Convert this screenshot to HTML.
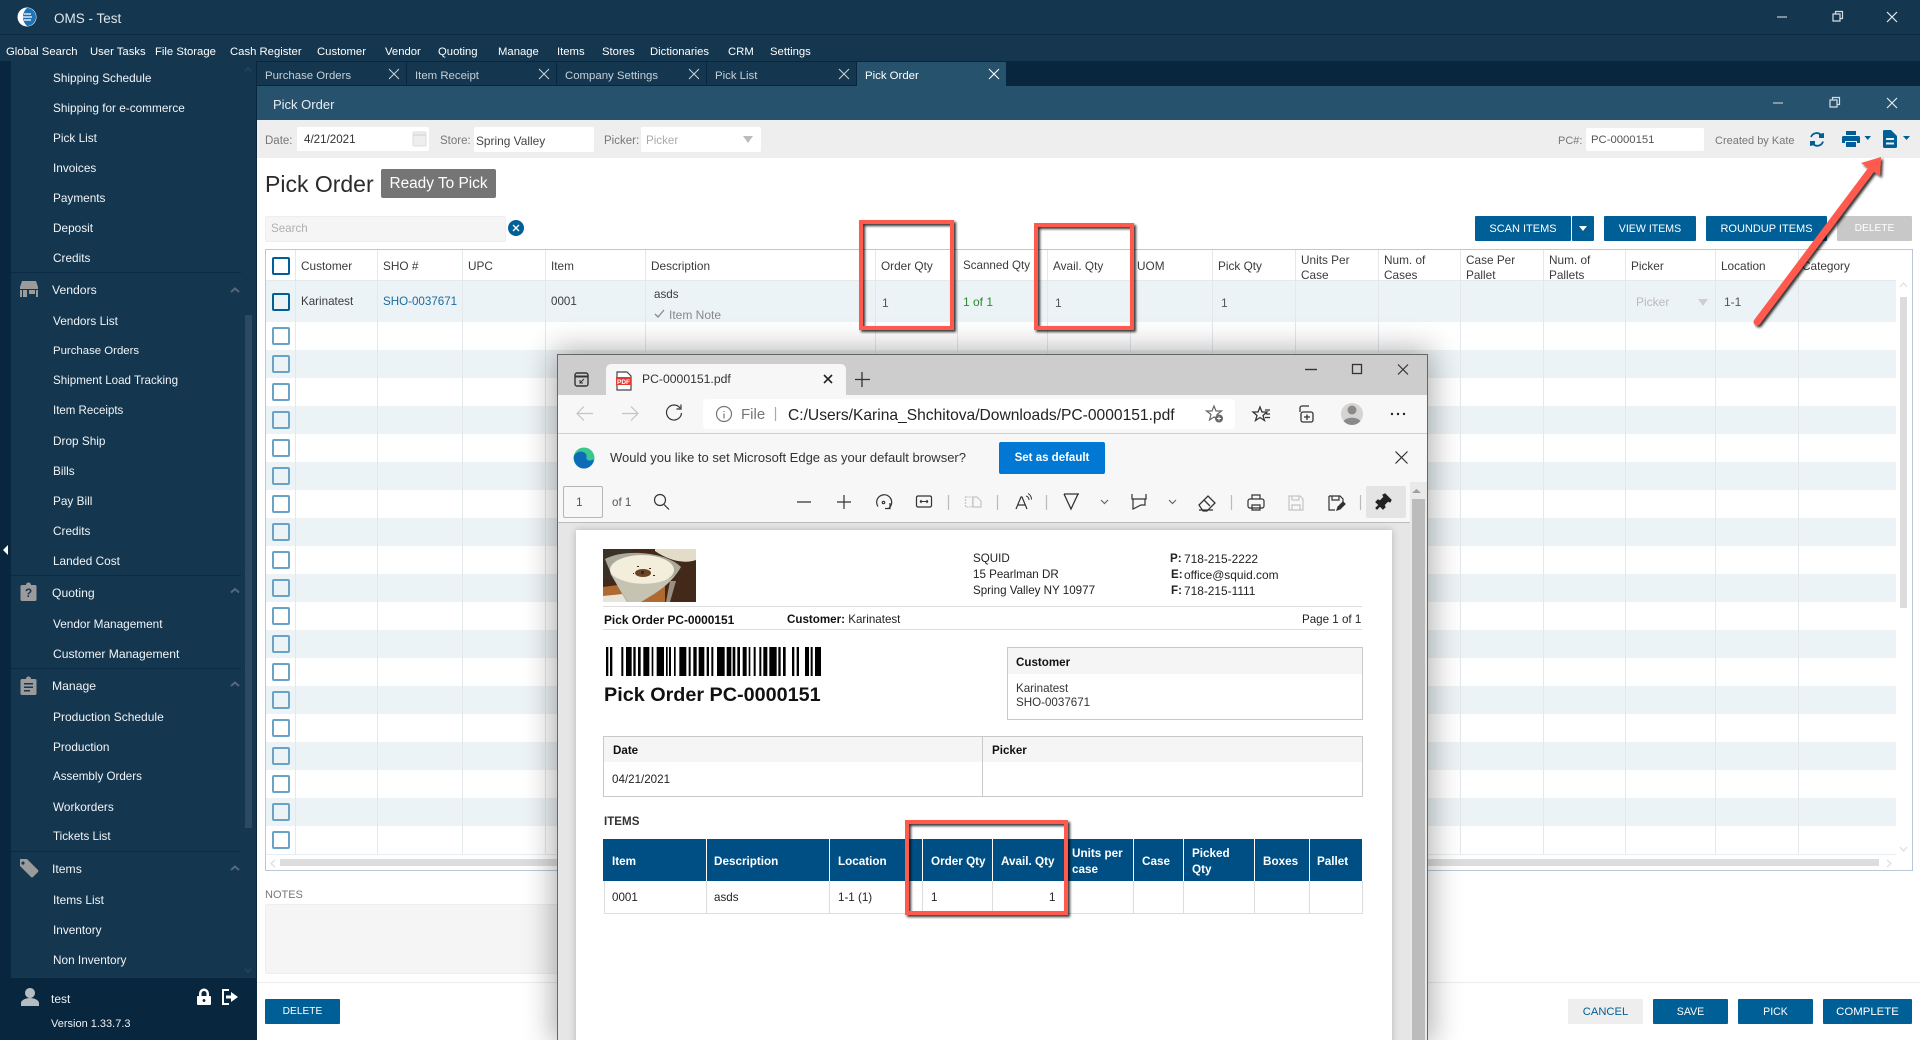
<!DOCTYPE html>
<html><head><meta charset="utf-8"><title>OMS - Test</title>
<style>
html,body{margin:0;padding:0;width:1920px;height:1040px;overflow:hidden;background:#fff;font-family:"Liberation Sans",Arial,sans-serif}
div,span,svg{position:absolute}
.t{white-space:nowrap;line-height:20px;font-size:12px;color:#333;margin-top:1px}
.m{color:#fff;font-size:11.3px}
.s{color:#f2f5f7;font-size:11.8px;left:53px;margin-top:0}
.h{color:#f0f3f5;font-size:12.2px;left:52px}
.tb{color:#c4d0d9;font-size:11.4px}
.l{color:#777;font-size:11.5px}
.c{color:#3b3b3b;font-size:11.8px}
.v{color:#3b3b3b;font-size:11.6px}
.b{color:#fff;font-size:11px;text-align:center;line-height:26px;height:25px;top:216px;background:#005f96;border-radius:1px}
.f{height:25px;top:999px;line-height:26px;background:#005f96;color:#fff;font-size:11.4px;text-align:center;border-radius:1px}
.i{background:#fff;border-radius:2px}
.p{font-size:11.6px;color:#222;white-space:nowrap;line-height:16px;margin-top:1px}
.n{font-size:11.9px}
.w{font-size:11.7px;color:#fff;font-weight:bold;white-space:nowrap;line-height:16px;margin-top:1px}
</style></head><body>

<!-- app chrome -->
<div style="left:0;top:0;width:1920px;height:34px;background:#14364f"></div>
<div style="left:0;top:34px;width:1920px;height:1px;background:#0b2a42"></div>
<div style="left:0;top:35px;width:1920px;height:26px;background:#14364f"></div>
<div style="left:0;top:61px;width:1920px;height:25px;background:#08263d"></div>
<div style="left:257px;top:86px;width:1663px;height:34px;background:#27526e"></div>
<div style="left:257px;top:120px;width:1663px;height:38px;background:#eeeeee"></div>

<span class="t" style="left:54px;top:8px;color:#dfe6eb;font-size:13.5px">OMS - Test</span>
<svg style="left:15px;top:5px" width="24" height="24" viewBox="0 0 24 24"><circle cx="12" cy="12" r="9.5" fill="#fff"/><path d="M12 3a9 9 0 0 1 0 18a12 12 0 0 1 -4 -9a12 12 0 0 1 4 -9z" fill="#1d72b8"/><path d="M9 9h7M8 12h9M9 15h7" stroke="#fff" stroke-width="1.2"/></svg>

<span class="t m" style="left:6px;top:41px">Global Search</span>
<span class="t m" style="left:90px;top:41px">User Tasks</span>
<span class="t m" style="left:155px;top:41px">File Storage</span>
<span class="t m" style="left:230px;top:41px">Cash Register</span>
<span class="t m" style="left:317px;top:41px">Customer</span>
<span class="t m" style="left:385px;top:41px">Vendor</span>
<span class="t m" style="left:438px;top:41px">Quoting</span>
<span class="t m" style="left:498px;top:41px">Manage</span>
<span class="t m" style="left:557px;top:41px">Items</span>
<span class="t m" style="left:602px;top:41px">Stores</span>
<span class="t m" style="left:650px;top:41px">Dictionaries</span>
<span class="t m" style="left:728px;top:41px">CRM</span>
<span class="t m" style="left:770px;top:41px">Settings</span>

<!-- tabs -->
<div style="left:257px;top:62px;width:149px;height:23px;background:#14364f"></div>
<div style="left:407px;top:62px;width:149px;height:23px;background:#14364f"></div>
<div style="left:557px;top:62px;width:149px;height:23px;background:#14364f"></div>
<div style="left:707px;top:62px;width:149px;height:23px;background:#14364f"></div>
<div style="left:857px;top:62px;width:149px;height:24px;background:#27526e"></div>
<span class="t tb" style="left:265px;top:65px">Purchase Orders</span>
<span class="t tb" style="left:415px;top:65px">Item Receipt</span>
<span class="t tb" style="left:565px;top:65px">Company Settings</span>
<span class="t tb" style="left:715px;top:65px">Pick List</span>
<span class="t tb" style="left:865px;top:65px;color:#fff">Pick Order</span>
<svg style="left:0;top:0" width="1920" height="160" fill="none" stroke="#c4d0d9" stroke-width="1.1">
<path d="M389 69l10 10M399 69l-10 10M539 69l10 10M549 69l-10 10M689 69l10 10M699 69l-10 10M839 69l10 10M849 69l-10 10"/>
<path d="M989 69l10 10M999 69l-10 10" stroke="#fff"/>
<path d="M1777 17h10" stroke="#aab8c4" stroke-width="1.4"/>
<path d="M1833 14h7v7h-7zM1835.500 14v-2.500h7v7h-2.500" stroke="#d5dde3" stroke-width="1.2"/>
<path d="M1887 12l10 10M1897 12l-10 10" stroke="#e6ebef" stroke-width="1.2"/>
<path d="M1773 103h10" stroke="#aab8c4" stroke-width="1.4"/>
<path d="M1830 100h7v7h-7zM1832.500 100v-2.500h7v7h-2.500" stroke="#d5dde3" stroke-width="1.2"/>
<path d="M1887 98l10 10M1897 98l-10 10" stroke="#e6ebef" stroke-width="1.2"/>
</svg>
<span class="t" style="left:273px;top:94px;color:#e8edf1;font-size:13px">Pick Order</span>

<!-- sidebar -->
<div style="left:0;top:61px;width:11px;height:979px;background:#08263d"></div>
<div style="left:11px;top:61px;width:245px;height:917px;background:#14364f"></div>
<div style="left:256px;top:61px;width:1px;height:979px;background:#08263d"></div>
<div style="left:245px;top:315px;width:7px;height:513px;background:#2b4a62"></div>
<div style="left:0;top:978px;width:256px;height:62px;background:#08263d"></div>
<div style="left:11px;top:272px;width:230px;height:1px;background:#0a2a45"></div>
<div style="left:11px;top:575px;width:230px;height:1px;background:#0a2a45"></div>
<div style="left:11px;top:668px;width:230px;height:1px;background:#0a2a45"></div>
<div style="left:11px;top:851px;width:230px;height:1px;background:#0a2a45"></div>

<span class="t s" style="top:68px">Shipping Schedule</span>
<span class="t s" style="top:98px">Shipping for e-commerce</span>
<span class="t s" style="top:128px">Pick List</span>
<span class="t s" style="top:158px">Invoices</span>
<span class="t s" style="top:188px">Payments</span>
<span class="t s" style="top:218px">Deposit</span>
<span class="t s" style="top:248px">Credits</span>
<span class="t h" style="top:279px">Vendors</span>
<span class="t s" style="top:311px">Vendors List</span>
<span class="t s" style="top:341px;font-size:11.4px">Purchase Orders</span>
<span class="t s" style="top:371px;font-size:11.6px">Shipment Load Tracking</span>
<span class="t s" style="top:401px;font-size:11.5px">Item Receipts</span>
<span class="t s" style="top:431px">Drop Ship</span>
<span class="t s" style="top:461px">Bills</span>
<span class="t s" style="top:491px">Pay Bill</span>
<span class="t s" style="top:521px">Credits</span>
<span class="t s" style="top:551px">Landed Cost</span>
<span class="t h" style="top:582px">Quoting</span>
<span class="t s" style="top:614px">Vendor Management</span>
<span class="t s" style="top:644px;font-size:12.1px">Customer Management</span>
<span class="t h" style="top:675px">Manage</span>
<span class="t s" style="top:707px;font-size:12px">Production Schedule</span>
<span class="t s" style="top:737px">Production</span>
<span class="t s" style="top:767px;font-size:11.6px">Assembly Orders</span>
<span class="t s" style="top:797px">Workorders</span>
<span class="t s" style="top:827px;font-size:11.6px">Tickets List</span>
<span class="t h" style="top:858px">Items</span>
<span class="t s" style="top:890px;font-size:11.9px">Items List</span>
<span class="t s" style="top:920px">Inventory</span>
<span class="t s" style="top:950px">Non Inventory</span>
<span class="t" style="left:51px;top:988px;color:#eef2f5;font-size:12px">test</span>
<span class="t" style="left:51px;top:1013px;color:#eef2f5;font-size:11px">Version 1.33.7.3</span>

<svg style="left:0;top:0" width="257" height="1040">
<g fill="#9b9b9b">
<path d="M22 281h14l2 6v2h-18v-2z"/><path d="M20 290h2v7h-2zM36 290h2v7h-2zM23 290h4v7h-4zM29 290h6v4h-6z"/>
<path d="M22 585h4a2.500 2.500 0 0 1 5 0h4a1.500 1.500 0 0 1 1.500 1.500v13a1.500 1.500 0 0 1 -1.500 1.500h-13a1.500 1.500 0 0 1 -1.500 -1.500v-13a1.500 1.500 0 0 1 1.500 -1.500z"/>
<path fill-rule="evenodd" d="M22 679h4a2.500 2.500 0 0 1 5 0h4a1.500 1.500 0 0 1 1.500 1.500v13a1.500 1.500 0 0 1 -1.500 1.500h-13a1.500 1.500 0 0 1 -1.500 -1.500v-13a1.500 1.500 0 0 1 1.500 -1.500zM24 683v1.500h9v-1.500zM24 686.500v1.500h9v-1.500zM24 690v1.500h6v-1.500z"/>
<path fill-rule="evenodd" d="M20 859h7l11 11a1.500 1.500 0 0 1 0 2l-5 5a1.500 1.500 0 0 1 -2 0l-11 -11zM23 861.500a1.600 1.600 0 1 0 .01 0z"/>
</g>
<text x="28.500" y="597" font-size="12" font-weight="bold" fill="#14364f" text-anchor="middle" font-family="Liberation Sans">?</text>
<path d="M231 592.500l4 -3.500 4 3.500M231 292l4 -3.500 4 3.500M231 686l4 -3.500 4 3.500M231 870l4 -3.500 4 3.500" fill="none" stroke="#54697a" stroke-width="2"/>
<path d="M245 71l3 -3 3 3M245 969l3 3 3 -3" fill="none" stroke="#2b4a62" stroke-width="1.2"/>
<path d="M8 545v10l-5 -5z" fill="#fff"/>
<path d="M30 988a5 5 0 1 0 .01 0zM21 1006v-3c0-3 5-5 9-5s9 2 9 5v3z" fill="#b5bcc2"/>
<path fill="#fff" fill-rule="evenodd" d="M199 996v-2.500a5 5 0 0 1 10 0v2.500h1a1 1 0 0 1 1 1v7a1 1 0 0 1 -1 1h-12a1 1 0 0 1 -1 -1v-7a1 1 0 0 1 1 -1zM201.500 996h5v-2.500a2.500 2.500 0 0 0 -5 0zM204 999a1.500 1.500 0 1 0 .01 0z"/>
<path d="M229 990h-6v14h6" fill="none" stroke="#fff" stroke-width="2"/><path d="M226 995.500h5v-3.500l7 5 -7 5v-3.500h-5z" fill="#fff"/>
</svg>

<!-- toolbar -->
<span class="t l" style="left:265px;top:130px">Date:</span>
<div class="i" style="left:297px;top:127px;width:132px;height:24px"></div>
<span class="t" style="left:304px;top:129px;color:#333;font-size:11.6px">4/21/2021</span>
<svg style="left:412px;top:130px" width="15" height="18" viewBox="0 0 15 18"><rect x="1" y="2" width="13" height="14" rx="1" fill="#eeeeee" stroke="#dedede"/><path d="M1 5h13" stroke="#dedede" stroke-width="2"/></svg>
<span class="t l" style="left:440px;top:130px">Store:</span>
<div class="i" style="left:474px;top:127px;width:120px;height:25px"></div>
<span class="t" style="left:476px;top:130px;color:#444;font-size:11.9px">Spring Valley</span>
<span class="t l" style="left:604px;top:130px">Picker:</span>
<div class="i" style="left:641px;top:127px;width:120px;height:25px"></div>
<span class="t" style="left:646px;top:130px;color:#aaa;font-size:11.6px">Picker</span>
<svg style="left:743px;top:135px" width="10" height="9"><path d="M0 1h10l-5 7z" fill="#bcbcbc"/></svg>
<span class="t l" style="left:1558px;top:130px;font-size:11px">PC#:</span>
<div class="i" style="left:1586px;top:128px;width:118px;height:23px"></div>
<span class="t" style="left:1591px;top:129px;color:#555;font-size:11.3px">PC-0000151</span>
<span class="t l" style="left:1715px;top:130px;font-size:11px">Created by Kate</span>
<svg style="left:1800px;top:125px" width="120" height="28">
<g fill="none" stroke="#005f96" stroke-width="1.800"><path d="M11 12a6 6 0 0 1 10 -2"/><path d="M23 16.500a6 6 0 0 1 -10 2.500"/></g>
<path d="M19 9l5 -1v5h-5zM15 20l-5 1v-5h5z" fill="#005f96"/>
<path d="M46 6h10v4h-10zM43.500 11h15a1.500 1.500 0 0 1 1.500 1.500v5.500h-3v-2h-12v2h-3v-5.500a1.500 1.500 0 0 1 1.500 -1.500zM46 17h10v5h-10z" fill="#005f96"/>
<path d="M64.500 11h6.500l-3.250 4z" fill="#005f96"/>
<path fill="#005f96" fill-rule="evenodd" d="M84.500 5h6.500l6 6v10.500a1.500 1.500 0 0 1 -1.500 1.500h-11a1.500 1.500 0 0 1 -1.500 -1.500v-15a1.500 1.500 0 0 1 1.500 -1.500zM86 13v2h8v-2zM86 17.500v2h8v-2z"/>
<path d="M103 11h7l-3.500 4z" fill="#005f96"/>
</svg>

<!-- page title -->
<span class="t" style="left:265px;top:173px;font-size:23px;color:#2b2b2b">Pick Order</span>
<div style="left:381px;top:169px;width:115px;height:29px;background:#757575;border-radius:2px;color:#fff;font-size:15.4px;line-height:30px;text-align:center">Ready To Pick</div>
<div style="left:265px;top:216px;width:239px;height:24px;background:#f5f5f5;border:1px solid #eee;border-radius:2px"></div>
<span class="t" style="left:271px;top:218px;color:#b0b0b0;font-size:11.6px">Search</span>
<svg style="left:508px;top:220px" width="16" height="16"><circle cx="8" cy="8" r="8" fill="#005f96"/><path d="M5 5l6 6M11 5l-6 6" stroke="#fff" stroke-width="1.4"/></svg>
<div class="b" style="left:1475px;width:96px">SCAN ITEMS</div>
<div class="b" style="left:1572px;width:22px"></div>
<svg style="left:1579px;top:226px" width="9" height="6"><path d="M0 0h8l-4 5z" fill="#fff"/></svg>
<div class="b" style="left:1604px;width:92px;font-size:10.6px">VIEW ITEMS</div>
<div class="b" style="left:1706px;width:121px">ROUNDUP ITEMS</div>
<div class="b" style="left:1837px;width:75px;background:#c8c8c8;font-size:10.2px">DELETE</div>

<!-- table -->
<div style="left:265px;top:249px;width:1646px;height:620px;border:1px solid #b9c8d8;background:#fff"></div>
<div style="left:266px;top:280px;width:1630px;height:1px;background:#e6e9eb"></div>
<div style="left:266px;top:281px;width:1630px;height:41px;background:#ecf3f6"></div>
<div style="left:266px;top:322px;width:1630px;height:532px;background:repeating-linear-gradient(to bottom,#fff 0,#fff 28px,#ecf3f6 28px,#ecf3f6 56px)"></div>
<div style="left:266px;top:854px;width:1630px;height:1px;background:#e6eef3"></div>
<svg style="left:0;top:250px" width="1920" height="604"><path stroke="#e3e8eb" d="M295.500 0v604M377.500 0v604M462.500 0v604M545.500 0v604M645.500 0v604M875.500 0v604M957.500 0v604M1047.500 0v604M1130.500 0v604M1212.500 0v604M1295.500 0v604M1378.500 0v604M1460.500 0v604M1543.500 0v604M1625.500 0v604M1715.500 0v604M1798.500 0v604"/></svg>
<span class="t c" style="left:301px;top:255px">Customer</span>
<span class="t c" style="left:383px;top:255px">SHO #</span>
<span class="t c" style="left:468px;top:255px">UPC</span>
<span class="t c" style="left:551px;top:255px">Item</span>
<span class="t c" style="left:651px;top:255px">Description</span>
<span class="t c" style="left:881px;top:255px">Order Qty</span>
<span class="t c" style="left:963px;top:255px;font-size:11.6px">Scanned Qty</span>
<span class="t c" style="left:1053px;top:255px">Avail. Qty</span>
<span class="t c" style="left:1137px;top:255px">UOM</span>
<span class="t c" style="left:1218px;top:255px">Pick Qty</span>
<span class="t c" style="left:1301px;top:249px">Units Per</span><span class="t c" style="left:1301px;top:264px">Case</span>
<span class="t c" style="left:1384px;top:249px">Num. of</span><span class="t c" style="left:1384px;top:264px">Cases</span>
<span class="t c" style="left:1466px;top:249px">Case Per</span><span class="t c" style="left:1466px;top:264px">Pallet</span>
<span class="t c" style="left:1549px;top:249px">Num. of</span><span class="t c" style="left:1549px;top:264px">Pallets</span>
<span class="t c" style="left:1631px;top:255px">Picker</span>
<span class="t c" style="left:1721px;top:255px">Location</span>
<span class="t c" style="left:1802px;top:255px">Category</span>
<span class="t v" style="left:301px;top:291px">Karinatest</span>
<span class="t" style="left:383px;top:291px;color:#1a6b9a;font-size:11.6px">SHO-0037671</span>
<span class="t v" style="left:551px;top:291px">0001</span>
<span class="t v" style="left:654px;top:284px">asds</span>
<svg style="left:654px;top:308px" width="11" height="11"><path d="M1 6l3 3 6-7" fill="none" stroke="#888" stroke-width="1.3"/></svg>
<span class="t" style="left:669px;top:304px;color:#888">Item Note</span>
<span class="t" style="left:882px;top:292px;color:#555">1</span>
<span class="t" style="left:963px;top:291px;color:#2a8a2a">1 of 1</span>
<span class="t" style="left:1055px;top:292px;color:#555">1</span>
<span class="t" style="left:1221px;top:292px;color:#555">1</span>
<span class="t" style="left:1636px;top:291px;color:#bbb">Picker</span>
<svg style="left:1698px;top:298px" width="10" height="9"><path d="M0 1h10l-5 7z" fill="#cfcfcf"/></svg>
<span class="t" style="left:1724px;top:291px;color:#555">1-1</span>
<svg style="left:270px;top:250px" width="22" height="604" fill="#fff" stroke-width="2">
<rect x="3" y="8" width="16" height="16" rx="1" stroke="#005f96"/>
<rect x="3" y="44" width="16" height="16" rx="1" stroke="#005f96" fill="none"/>
<g stroke="#6aa3c6" fill="none">
<rect x="3" y="78" width="16" height="16" rx="1"/><rect x="3" y="106" width="16" height="16" rx="1"/><rect x="3" y="134" width="16" height="16" rx="1"/><rect x="3" y="162" width="16" height="16" rx="1"/><rect x="3" y="190" width="16" height="16" rx="1"/><rect x="3" y="218" width="16" height="16" rx="1"/><rect x="3" y="246" width="16" height="16" rx="1"/><rect x="3" y="274" width="16" height="16" rx="1"/><rect x="3" y="302" width="16" height="16" rx="1"/><rect x="3" y="330" width="16" height="16" rx="1"/><rect x="3" y="358" width="16" height="16" rx="1"/><rect x="3" y="386" width="16" height="16" rx="1"/><rect x="3" y="414" width="16" height="16" rx="1"/><rect x="3" y="442" width="16" height="16" rx="1"/><rect x="3" y="470" width="16" height="16" rx="1"/><rect x="3" y="498" width="16" height="16" rx="1"/><rect x="3" y="526" width="16" height="16" rx="1"/><rect x="3" y="554" width="16" height="16" rx="1"/><rect x="3" y="582" width="16" height="16" rx="1"/>
</g></svg>
<!-- table scrollbars -->
<div style="left:1900px;top:297px;width:7px;height:311px;background:#dcdcdc"></div>
<div style="left:280px;top:859px;width:1599px;height:7px;background:#dddddd"></div>
<svg style="left:0;top:280px" width="1920" height="600" fill="none" stroke="#e0e0e0" stroke-width="1.3"><path d="M1900 7l3.500 -4 3.500 4M1900 567l3.500 4 3.500 -4M275 580l-4 3.500 4 3.500M1887 580l4 3.500 -4 3.500"/></svg>

<!-- notes / footer -->
<span class="t" style="left:265px;top:884px;color:#777;font-size:11px">NOTES</span>
<div style="left:265px;top:904px;width:500px;height:68px;background:#f5f5f5;border:1px solid #eee;border-radius:2px"></div>
<div style="left:257px;top:982px;width:1663px;height:1px;background:#ececec"></div>
<div class="f" style="left:265px;width:75px;font-size:10.2px">DELETE</div>
<div class="f" style="left:1568px;width:75px;background:#eeeeee;color:#005f96;font-size:11.2px">CANCEL</div>
<div class="f" style="left:1653px;width:75px;font-size:10.6px">SAVE</div>
<div class="f" style="left:1738px;width:75px;font-size:10.6px">PICK</div>
<div class="f" style="left:1823px;width:89px">COMPLETE</div>

<!-- EDGE WINDOW -->
<div style="left:557px;top:354px;width:869px;height:685px;background:#e6e6e6;border:1px solid #666;border-bottom:0;box-shadow:0 0 28px 4px rgba(0,0,0,.32);overflow:hidden">
 <div style="left:0;top:0;width:869px;height:40px;background:#cdcdcd"></div>
 <div style="left:48px;top:9px;width:240px;height:32px;background:#f7f7f7;border-radius:5px 5px 0 0"></div>
 <div style="left:0;top:40px;width:869px;height:38px;background:#f7f7f7"></div>
 <div style="left:0;top:78px;width:869px;height:1px;background:#cfcfcf"></div>
 <div style="left:0;top:79px;width:869px;height:88px;background:#f7f7f7"></div>
 <div style="left:0;top:167px;width:852px;height:1px;background:#bdbdbd"></div>
 <div style="left:145px;top:44px;width:532px;height:30px;background:#fff;border-radius:4px"></div>
 <div style="left:5px;top:131px;width:38px;height:30px;border:1px solid #b5b5b5;border-radius:2px;background:#f7f7f7"></div>
 <div style="left:808px;top:131px;width:40px;height:32px;background:#e4e4e4;border-radius:2px"></div>
 <div style="left:441px;top:87px;width:106px;height:32px;background:#0078d4;border-radius:2px;color:#fff;font-size:11.5px;font-weight:bold;line-height:33px;text-align:center">Set as default</div>
 <div style="left:852px;top:127px;width:17px;height:563px;background:#e9e9e9"></div>
 <div style="left:854px;top:144px;width:13px;height:560px;background:#bcbcbc"></div>
 <div style="left:18px;top:175px;width:816px;height:520px;background:#fff;box-shadow:0 0 7px rgba(0,0,0,.22)"></div>
</div>

<span class="t" style="left:642px;top:368px;font-size:12.2px;color:#333">PC-0000151.pdf</span>
<span class="t" style="left:741px;top:404px;font-size:15px;color:#777">File</span>
<span class="t" style="left:788px;top:405px;font-size:15.6px;color:#222">C:/Users/Karina_Shchitova/Downloads/PC-0000151.pdf</span>
<span class="t" style="left:610px;top:447px;font-size:13px;color:#333">Would you like to set Microsoft Edge as your default browser?</span>
<span class="t" style="left:576px;top:491px;font-size:12px;color:#555">1</span>
<span class="t" style="left:612px;top:492px;font-size:11.6px;color:#555">of 1</span>

<svg style="left:0;top:0" width="1920" height="540" fill="none" stroke="#333" stroke-width="1.2">
<rect x="575" y="373" width="13" height="13" rx="2" stroke-width="1.4"/><path d="M575 376.500h13" stroke-width="2"/><path d="M584 379l-4 4M580 380v3h3" stroke-width="1"/>
<path d="M617 372h10l4 4v14h-14z" stroke="#444" fill="#fff"/><rect x="616" y="377" width="15" height="8" fill="#e53935" stroke="none"/>
<text x="623.500" y="384" font-size="6.500" font-weight="bold" fill="#fff" stroke="none" text-anchor="middle" font-family="Liberation Sans">PDF</text>
<path d="M824 375l8 8M832 375l-8 8" stroke="#222" stroke-width="1.6"/>
<path d="M862 372v15M855 379.500h15" stroke-width="1.3"/>
<path d="M1305 369.500h12" stroke-width="1.4"/><rect x="1352.500" y="364.500" width="9" height="9" stroke-width="1.3"/><path d="M1398 364.500l10 10M1408 364.500l-10 10"/>
<g stroke="#c4c4c4"><path d="M578 413.500h15M584 406.500l-7 7 7 7M622 413.500h15M631 406.500l7 7 -7 7"/></g>
<path d="M680 408a7.500 7.500 0 1 0 1.500 5M681 404.500v4.500h-4.500"/>
<circle cx="724" cy="414" r="7.500" stroke="#777"/><path d="M724 411v1M724 413.500v5" stroke="#777"/>
<path d="M775.500 407v14" stroke="#aaa"/>
<path d="M1214 406l2 5h5.500l-4.500 3.500 1.500 5.500 -4.500 -3 -4.500 3 1.500 -5.500 -4.500 -3.500h5.500z" stroke="#666"/><circle cx="1219" cy="418.500" r="4" fill="#666" stroke="none"/><path d="M1217 418.500h4M1219 416.500v4" stroke="#fff" stroke-width=".9"/>
<path d="M1260 407l2 5h5l-4 3.500 1.500 5 -4.500 -3 -4.500 3 1.500 -5 -4 -3.500h5zM1265 410h5M1266 414h4M1265 417.500h5" stroke-width="1.300"/>
<path d="M1300 412v-4a2 2 0 0 1 2 -2h7M1303 422a2 2 0 0 1 -2 -2v-6a2 2 0 0 1 2 -2h8a2 2 0 0 1 2 2v6a2 2 0 0 1 -2 2zM1307 414.500v5.500M1304 417h6" stroke-width="1.3"/>
<circle cx="1352" cy="414" r="11" fill="#d6d4d1" stroke="none"/><circle cx="1352" cy="410" r="4.500" fill="#8a8a8a" stroke="none"/><path d="M1343.500 421a9 5 0 0 1 17 0a11 11 0 0 1 -17 0z" fill="#8a8a8a" stroke="none"/>
<circle cx="1392" cy="414" r="1.200" fill="#222" stroke="none"/><circle cx="1398" cy="414" r="1.200" fill="#222" stroke="none"/><circle cx="1404" cy="414" r="1.200" fill="#222" stroke="none"/>
<circle cx="584" cy="458" r="10.500" fill="#38c78f" stroke="none"/>
<path d="M574 456c2 -4 6 -5 9 -4c3 1 4 3 3.500 5c-.5 2 1 4 4 3.500l3.500 -1c-1 5 -5 9 -10 9c-6 0 -11 -5.500 -10 -12.500z" fill="#0c6cb8" stroke="none"/>
<path d="M1395.500 451.500l12 12M1407.500 451.500l-12 12"/>
<circle cx="660" cy="500" r="5.500"/><path d="M664 504.500l5 5"/>
<path d="M797 502h14M844 495v14M837 502h14"/>
<path d="M878 506.500a7.500 7.500 0 1 1 11 1.500M890 503v5.500h-5"/><circle cx="883.500" cy="502.500" r="1.200"/>
<rect x="916.500" y="496" width="15" height="11" rx="1.500"/><path d="M920 501.500h8M920 501.500l1.500 -1.500M920 501.500l1.500 1.500M928 501.500l-1.500 -1.500M928 501.500l-1.500 1.500" stroke-width="1"/>
<path d="M948.500 495v15M997.500 495v15M1046.500 495v15M1231.500 495v15M1360.500 495v15" stroke="#bbb"/>
<rect x="965.500" y="497" width="7" height="10" stroke="#c5c5c5" stroke-dasharray="2 1"/><path d="M973 497h4l4 4v6h-8z" stroke="#c5c5c5"/>
<path d="M1016 509l5 -12h1l5 12M1018 505h7" stroke-width="1.200"/><path d="M1026 496a4 4 0 0 1 3 4M1028 493.500a7 7 0 0 1 3.500 6" stroke-width="1"/>
<path d="M1064 494h15M1064 494l7 15 7 -15M1070 508h2" stroke-width="1.300"/>
<path d="M1101 500l3.500 3.500 3.500 -3.500M1169 500l3.500 3.500 3.500 -3.500" stroke="#666"/>
<path d="M1132 494v5h14v-5M1133 499v10l8 -4h4v-6"/>
<path d="M1199 505l9 -9 7 7 -8 8h-4zM1204 500l6 6M1199 510h14" stroke-width="1.300"/>
<rect x="1248" y="499" width="16" height="9" rx="2"/><path d="M1252 499v-4h8v4M1252 505h8v5h-8z"/>
<path d="M1289 496h11l3 3v11h-14zM1292 496v4h7v-4M1292 510v-5h8v5" stroke="#c5c5c5"/>
<path d="M1329 496h11l3 3v4M1329 496v14h6M1332 496v4h7v-4"/><path d="M1337 510l1 -3 5 -5 2 2 -5 5z" fill="#333"/>
<path d="M1380 506l-3 3-1-1 3-3-3-3 2-2 2 1 4-4-1-2 2-1 6 6-1 2-2-1-4 4 1 2-2 2z" fill="#222" stroke="#222"/>
<path d="M1412 493l4.500 -4 4.500 4z" fill="#9f9f9f" stroke="none"/>
</svg>

<!-- PDF content -->
<svg style="left:603px;top:549px" width="93" height="53" viewBox="0 0 93 53">
<rect width="93" height="53" fill="#43291a"/>
<rect width="30" height="30" fill="#3a3129"/>
<path d="M0 38L30 34 62 32V53H0z" fill="#b06a30"/>
<path d="M0 47L30 44V53H0z" fill="#e8e4d8"/>
<path d="M52 0H93V11C82 15 66 12 52 2z" fill="#e2dcc8"/>
<path d="M2 10C20 0 62 2 78 18C68 36 50 46 38 53H24C16 40 8 26 2 10z" fill="#aaa99c"/>
<ellipse cx="39" cy="21" rx="32" ry="15" fill="#f3eedc"/>
<path d="M7 24C20 37 55 39 72 26C62 40 48 46 38 53H25C19 44 13 34 7 24z" fill="#c6c3b3"/>
<ellipse cx="40" cy="24" rx="8" ry="4" fill="#6b4427"/>
<g fill="#3d2615"><rect x="34" y="17" width="2" height="1"/><rect x="46" y="19" width="2" height="1"/><rect x="30" y="24" width="1" height="1"/><rect x="50" y="26" width="2" height="1"/><rect x="38" y="22" width="3" height="3"/></g>
<path d="M67 32l-4 21h4l6-21z" fill="#9a8f80"/>
</svg>
<div style="left:603px;top:606px;width:759px;height:1px;border-top:1px solid #ddd"></div>
<div style="left:603px;top:629px;width:759px;height:1px;border-top:1px solid #ddd"></div>
<span class="p" style="left:604px;top:611px;font-weight:bold;color:#111;font-size:11.9px">Pick Order PC-0000151</span>
<span class="p" style="left:787px;top:611px"><b style="color:#111">Customer:</b> Karinatest</span>
<span class="p" style="left:1302px;top:611px">Page 1 of 1</span>
<span class="p" style="left:973px;top:550px">SQUID</span>
<span class="p" style="left:973px;top:566px">15 Pearlman DR</span>
<span class="p" style="left:973px;top:582px">Spring Valley NY 10977</span>
<span class="p" style="left:1170px;top:550px"><b>P:</b></span><span class="p n" style="left:1184px;top:550px">718-215-2222</span>
<span class="p" style="left:1171px;top:566px"><b>E:</b></span><span class="p n" style="left:1184px;top:566px">office@squid.com</span>
<span class="p" style="left:1171px;top:582px"><b>F:</b></span><span class="p n" style="left:1184px;top:582px">718-215-1111</span>
<svg style="left:590px;top:647px" width="240" height="29" viewBox="0 0 720 87"><path fill="#000" d="M48 0h7v87h-7zM60 0h7v87h-7zM94 0h6v87h-6zM108 0h17v87h-17zM130 0h7v87h-7zM144 0h8v87h-8zM160 0h18v87h-18zM185 0h5v87h-5zM200 0h22v87h-22zM228 0h5v87h-5zM237 0h6v87h-6zM252 0h5v87h-5zM268 0h21v87h-21zM296 0h6v87h-6zM310 0h10v87h-10zM326 0h17v87h-17zM350 0h7v87h-7zM364 0h6v87h-6zM381 0h23v87h-23zM410 0h14v87h-14zM428 0h8v87h-8zM442 0h8v87h-8zM458 0h12v87h-12zM476 0h5v87h-5zM491 0h6v87h-6zM508 0h6v87h-6zM520 0h12v87h-12zM538 0h22v87h-22zM565 0h7v87h-7zM579 0h8v87h-8zM606 0h7v87h-7zM620 0h7v87h-7zM645 0h12v87h-12zM662 0h6v87h-6zM675 0h18v87h-18z"/></svg>
<span style="left:604px;top:683px;font-size:19.8px;font-weight:bold;color:#111;white-space:nowrap;line-height:24px">Pick Order PC-0000151</span>

<div style="left:1007px;top:647px;width:354px;height:71px;border:1px solid #c9c9c9"></div>
<div style="left:1008px;top:648px;width:354px;height:26px;background:#f5f5f5"></div>
<span class="p" style="left:1016px;top:654px;font-weight:bold;color:#111">Customer</span>
<span class="p" style="left:1016px;top:680px;color:#333">Karinatest</span>
<span class="p" style="left:1016px;top:694px;color:#333">SHO-0037671</span>

<div style="left:603px;top:736px;width:758px;height:59px;border:1px solid #c9c9c9"></div>
<div style="left:604px;top:737px;width:758px;height:25px;background:#f5f5f5"></div>
<div style="left:982px;top:736px;width:1px;height:60px;background:#c9c9c9"></div>
<span class="p" style="left:613px;top:742px;font-weight:bold;color:#111">Date</span>
<span class="p" style="left:992px;top:742px;font-weight:bold;color:#111">Picker</span>
<span class="p" style="left:612px;top:771px">04/21/2021</span>

<span class="p" style="left:604px;top:813px;font-weight:bold;color:#333">ITEMS</span>
<div style="left:603px;top:839px;width:759px;height:42px;background:#004f84"></div>
<div style="left:604px;top:881px;width:757px;height:32px;border:1px solid #ddd;border-top:0"></div>
<svg style="left:603px;top:839px" width="760" height="76"><path stroke="#fff" d="M103.500 0v42M226.500 0v42M319.500 0v42M389.500 0v42M464.500 0v42M530.500 0v42M580.500 0v42M651.500 0v42M706.500 0v42"/><path stroke="#ddd" d="M103.500 42v33M226.500 42v33M319.500 42v33M389.500 42v33M464.500 42v33M530.500 42v33M580.500 42v33M651.500 42v33M706.500 42v33"/></svg>
<span class="w" style="left:612px;top:853px">Item</span>
<span class="w" style="left:714px;top:853px">Description</span>
<span class="w" style="left:838px;top:853px">Location</span>
<span class="w" style="left:931px;top:853px">Order Qty</span>
<span class="w" style="left:1001px;top:853px">Avail. Qty</span>
<span class="w" style="left:1072px;top:845px">Units per</span><span class="w" style="left:1072px;top:861px">case</span>
<span class="w" style="left:1142px;top:853px">Case</span>
<span class="w" style="left:1192px;top:845px">Picked</span><span class="w" style="left:1192px;top:861px">Qty</span>
<span class="w" style="left:1263px;top:853px">Boxes</span>
<span class="w" style="left:1317px;top:853px">Pallet</span>
<span class="p" style="left:612px;top:889px">0001</span>
<span class="p" style="left:714px;top:889px">asds</span>
<span class="p" style="left:838px;top:889px">1-1 (1)</span>
<span class="p" style="left:931px;top:889px">1</span>
<span class="p" style="left:1049px;top:889px">1</span>

<!-- annotations -->
<svg style="left:0;top:0" width="1920" height="1040" fill="none">
<defs><filter id="sh" x="-20%" y="-20%" width="140%" height="140%"><feDropShadow dx="2" dy="2" stdDeviation="1.200" flood-color="#000" flood-opacity=".8"/></filter></defs>
<g filter="url(#sh)" stroke="#ff5a4d" stroke-width="4">
<rect x="861" y="222" width="91" height="106"/>
<rect x="1036" y="225" width="96" height="103"/>
<rect x="907" y="822" width="159" height="91"/>
</g>
<g filter="url(#sh)"><path d="M1757 322L1874 166" stroke="#ff5a4d" stroke-width="7" stroke-linecap="round"/><path d="M1881 157L1861 163L1880 176z" fill="#ff5a4d"/></g>
</svg>
</body></html>
